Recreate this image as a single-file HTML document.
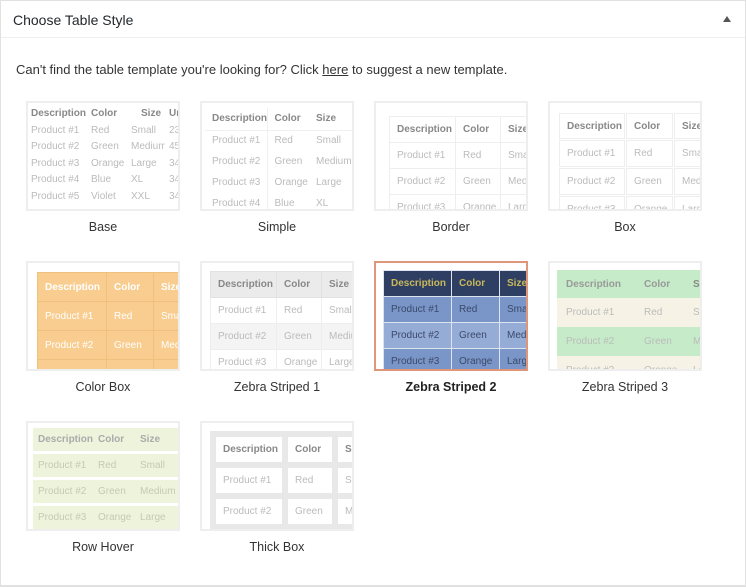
<!DOCTYPE html>
<html><head><meta charset="utf-8"><style>
*{margin:0;padding:0;box-sizing:border-box}
body{width:746px;height:588px;background:#fff;font-family:"Liberation Sans",sans-serif;position:relative;overflow:hidden}
.panel{position:absolute;left:0;top:0;width:746px;height:587px;border:1px solid #e1e1e1;border-bottom:2px solid #e1e1e1}
.hd{position:absolute;left:0;top:0;width:744px;height:37px;border-bottom:1px solid #eee;font-size:14px;color:#23282d;padding:11px 0 0 12px}
.arrow{position:absolute;right:14px;top:15px;width:0;height:0;border-left:4px solid transparent;border-right:4px solid transparent;border-bottom:6px solid #555}
.msg{position:absolute;left:16px;top:62px;font-size:13px;color:#333}
.msg a{color:#0073aa;text-decoration:underline;color:#333}
.th{position:absolute;width:154px;height:110px;border:2px solid #eee;overflow:hidden;background:#fff}
.lb{position:absolute;width:154px;text-align:center;font-size:12.5px;color:#333}
table{position:absolute;border-collapse:collapse;table-layout:fixed;font-size:10px;white-space:nowrap}
td{overflow:hidden;color:#bbb;padding:0 0 0 7px;vertical-align:middle}
tr:first-child td{color:#888;font-weight:bold}
</style></head><body>
<div class="panel">
<div class="hd">Choose Table Style<div class="arrow"></div></div>
</div>
<div class="msg">Can't find the table template you're looking for? Click <a>here</a> to suggest a new template.</div>

<!-- Base -->
<div class="th" style="left:26px;top:101px">
<table style="left:1px;top:2px;width:160px">
<col style="width:60px"><col style="width:40px"><col style="width:36px"><col style="width:24px">
<tr style="height:17px"><td style="padding-left:2px">Description</td><td style="padding-left:2px">Color</td><td style="padding-left:12px">Size</td><td style="padding-left:4px">Uni</td></tr>
<tr style="height:16.5px"><td style="padding-left:2px">Product #1</td><td style="padding-left:2px">Red</td><td style="padding-left:2px">Small</td><td style="padding-left:4px">23</td></tr>
<tr style="height:16.5px"><td style="padding-left:2px">Product #2</td><td style="padding-left:2px">Green</td><td style="padding-left:2px">Medium</td><td style="padding-left:4px">45</td></tr>
<tr style="height:16.5px"><td style="padding-left:2px">Product #3</td><td style="padding-left:2px">Orange</td><td style="padding-left:2px">Large</td><td style="padding-left:4px">34</td></tr>
<tr style="height:16.5px"><td style="padding-left:2px">Product #4</td><td style="padding-left:2px">Blue</td><td style="padding-left:2px">XL</td><td style="padding-left:4px">34</td></tr>
<tr style="height:16.5px"><td style="padding-left:2px">Product #5</td><td style="padding-left:2px">Violet</td><td style="padding-left:2px">XXL</td><td style="padding-left:4px">34</td></tr>
</table></div>
<div class="lb" style="left:26px;top:220px">Base</div>

<!-- Simple -->
<div class="th" style="left:200px;top:101px">
<table style="left:3px;top:5px;width:160px">
<col style="width:62px"><col style="width:42px"><col style="width:56px">
<tr style="height:22px;border-bottom:1px solid #f0f0f0"><td>Description</td><td style="border-left:1px solid #f0f0f0">Color</td><td>Size</td></tr>
<tr style="height:21px"><td>Product #1</td><td style="border-left:1px solid #f0f0f0">Red</td><td>Small</td></tr>
<tr style="height:21px"><td>Product #2</td><td style="border-left:1px solid #f0f0f0">Green</td><td>Medium</td></tr>
<tr style="height:21px"><td>Product #3</td><td style="border-left:1px solid #f0f0f0">Orange</td><td>Large</td></tr>
<tr style="height:21px"><td>Product #4</td><td style="border-left:1px solid #f0f0f0">Blue</td><td>XL</td></tr>
</table></div>
<div class="lb" style="left:200px;top:220px">Simple</div>

<!-- Border -->
<div class="th" style="left:374px;top:101px">
<table style="left:13px;top:13px;width:160px">
<col style="width:66px"><col style="width:45px"><col style="width:49px">
<tr style="height:26px"><td style="border:1px solid #eee">Description</td><td style="border:1px solid #eee">Color</td><td style="border:1px solid #eee">Size</td></tr>
<tr style="height:26px"><td style="border:1px solid #eee">Product #1</td><td style="border:1px solid #eee">Red</td><td style="border:1px solid #eee">Small</td></tr>
<tr style="height:26px"><td style="border:1px solid #eee">Product #2</td><td style="border:1px solid #eee">Green</td><td style="border:1px solid #eee">Medium</td></tr>
<tr style="height:26px"><td style="border:1px solid #eee">Product #3</td><td style="border:1px solid #eee">Orange</td><td style="border:1px solid #eee">Large</td></tr>
</table></div>
<div class="lb" style="left:374px;top:220px">Border</div>

<!-- Box -->
<div class="th" style="left:548px;top:101px">
<table style="left:8px;top:9px;width:170px;border-collapse:separate;border-spacing:1px">
<col style="width:66px"><col style="width:47px"><col style="width:57px">
<tr style="height:26px"><td style="border:1px solid #eee">Description</td><td style="border:1px solid #eee">Color</td><td style="border:1px solid #eee">Size</td></tr>
<tr style="height:27px"><td style="border:1px solid #eee">Product #1</td><td style="border:1px solid #eee">Red</td><td style="border:1px solid #eee">Small</td></tr>
<tr style="height:27px"><td style="border:1px solid #eee">Product #2</td><td style="border:1px solid #eee">Green</td><td style="border:1px solid #eee">Medium</td></tr>
<tr style="height:27px"><td style="border:1px solid #eee">Product #3</td><td style="border:1px solid #eee">Orange</td><td style="border:1px solid #eee">Large</td></tr>
</table></div>
<div class="lb" style="left:548px;top:220px">Box</div>

<!-- Color Box -->
<div class="th" style="left:26px;top:261px">
<table style="left:9px;top:9px;width:170px;background:#f8cd8f">
<col style="width:69px"><col style="width:47px"><col style="width:54px">
<tr style="height:29px"><td style="border:1px solid #f0c07e;color:#fff">Description</td><td style="border:1px solid #f0c07e;color:#fff">Color</td><td style="border:1px solid #f0c07e;color:#fff">Size</td></tr>
<tr style="height:29px"><td style="border:1px solid #f0c07e;color:#fff">Product #1</td><td style="border:1px solid #f0c07e;color:#fff">Red</td><td style="border:1px solid #f0c07e;color:#fff">Small</td></tr>
<tr style="height:29px"><td style="border:1px solid #f0c07e;color:#fff">Product #2</td><td style="border:1px solid #f0c07e;color:#fff">Green</td><td style="border:1px solid #f0c07e;color:#fff">Medium</td></tr>
<tr style="height:29px"><td style="border:1px solid #f0c07e;color:#fff">Product #3</td><td style="border:1px solid #f0c07e;color:#fff">Orange</td><td style="border:1px solid #f0c07e;color:#fff">Large</td></tr>
</table></div>
<div class="lb" style="left:26px;top:380px">Color Box</div>

<!-- Zebra 1 -->
<div class="th" style="left:200px;top:261px">
<table style="left:8px;top:8px;width:170px">
<col style="width:66px"><col style="width:45px"><col style="width:59px">
<tr style="height:26px;background:#ebebeb"><td style="border:1px solid #e2e2e2">Description</td><td style="border:1px solid #e2e2e2">Color</td><td style="border:1px solid #e2e2e2">Size</td></tr>
<tr style="height:26px"><td style="border:1px solid #eee">Product #1</td><td style="border:1px solid #eee">Red</td><td style="border:1px solid #eee">Small</td></tr>
<tr style="height:26px;background:#f4f4f4"><td style="border:1px solid #eee">Product #2</td><td style="border:1px solid #eee">Green</td><td style="border:1px solid #eee">Medium</td></tr>
<tr style="height:26px"><td style="border:1px solid #eee">Product #3</td><td style="border:1px solid #eee">Orange</td><td style="border:1px solid #eee">Large</td></tr>
</table></div>
<div class="lb" style="left:200px;top:380px">Zebra Striped 1</div>

<!-- Zebra 2 -->
<div class="th" style="left:374px;top:261px;border-color:#e0967a">
<table style="left:7px;top:7px;width:170px;border-collapse:separate;border-spacing:1px;background:#dde4ef">
<col style="width:67px"><col style="width:47px"><col style="width:56px">
<tr style="height:25px;background:#2e3f63"><td style="color:#c9b85a">Description</td><td style="color:#c9b85a">Color</td><td style="color:#c9b85a">Size</td></tr>
<tr style="height:25px;background:#7a95c8"><td style="color:#3b4a6a">Product #1</td><td style="color:#3b4a6a">Red</td><td style="color:#3b4a6a">Small</td></tr>
<tr style="height:25px;background:#95acd6"><td style="color:#3b4a6a">Product #2</td><td style="color:#3b4a6a">Green</td><td style="color:#3b4a6a">Medium</td></tr>
<tr style="height:25px;background:#7a95c8"><td style="color:#3b4a6a">Product #3</td><td style="color:#3b4a6a">Orange</td><td style="color:#3b4a6a">Large</td></tr>
</table></div>
<div class="lb" style="left:374px;top:380px;font-weight:bold;color:#222">Zebra Striped 2</div>

<!-- Zebra 3 -->
<div class="th" style="left:548px;top:261px">
<table style="left:7px;top:7px;width:170px">
<col style="width:79px"><col style="width:50px"><col style="width:41px">
<tr style="height:28px;background:#c6ebc8"><td style="padding-left:9px;color:#999">Description</td><td style="padding-left:8px;color:#999">Color</td><td>Size</td></tr>
<tr style="height:29px;background:#f6f3e6"><td style="padding-left:9px">Product #1</td><td style="padding-left:8px">Red</td><td>Small</td></tr>
<tr style="height:29px;background:#c6ebc8"><td style="padding-left:9px">Product #2</td><td style="padding-left:8px">Green</td><td>Medium</td></tr>
<tr style="height:29px;background:#f6f3e6"><td style="padding-left:9px">Product #3</td><td style="padding-left:8px">Orange</td><td>Large</td></tr>
</table></div>
<div class="lb" style="left:548px;top:380px">Zebra Striped 3</div>

<!-- Row Hover -->
<div class="th" style="left:26px;top:421px">
<table style="left:5px;top:5px;width:160px;border-collapse:separate;border-spacing:0 3px;margin-top:-3px">
<col style="width:63px"><col style="width:42px"><col style="width:55px">
<tr style="height:23px;background:#eef4dc"><td style="padding-left:5px;color:#aaa">Description</td><td style="padding-left:2px;color:#aaa">Color</td><td style="padding-left:2px;color:#aaa">Size</td></tr>
<tr style="height:23px;background:#eef4dc"><td style="padding-left:5px;color:#c5c9b5">Product #1</td><td style="padding-left:2px;color:#c5c9b5">Red</td><td style="padding-left:2px;color:#c5c9b5">Small</td></tr>
<tr style="height:23px;background:#eef4dc"><td style="padding-left:5px;color:#c5c9b5">Product #2</td><td style="padding-left:2px;color:#c5c9b5">Green</td><td style="padding-left:2px;color:#c5c9b5">Medium</td></tr>
<tr style="height:23px;background:#eef4dc"><td style="padding-left:5px;color:#c5c9b5">Product #3</td><td style="padding-left:2px;color:#c5c9b5">Orange</td><td style="padding-left:2px;color:#c5c9b5">Large</td></tr>
</table></div>
<div class="lb" style="left:26px;top:540px">Row Hover</div>

<!-- Thick Box -->
<div class="th" style="left:200px;top:421px">
<table style="left:8px;top:8px;width:190px;border-collapse:separate;border-spacing:6px;background:#e8e8e8">
<col style="width:66px"><col style="width:44px"><col style="width:60px">
<tr style="height:25px;background:#fff"><td>Description</td><td>Color</td><td>Size</td></tr>
<tr style="height:25px;background:#fff"><td>Product #1</td><td>Red</td><td>Small</td></tr>
<tr style="height:25px;background:#fff"><td>Product #2</td><td>Green</td><td>Medium</td></tr>
</table></div>
<div class="lb" style="left:200px;top:540px">Thick Box</div>
</body></html>
